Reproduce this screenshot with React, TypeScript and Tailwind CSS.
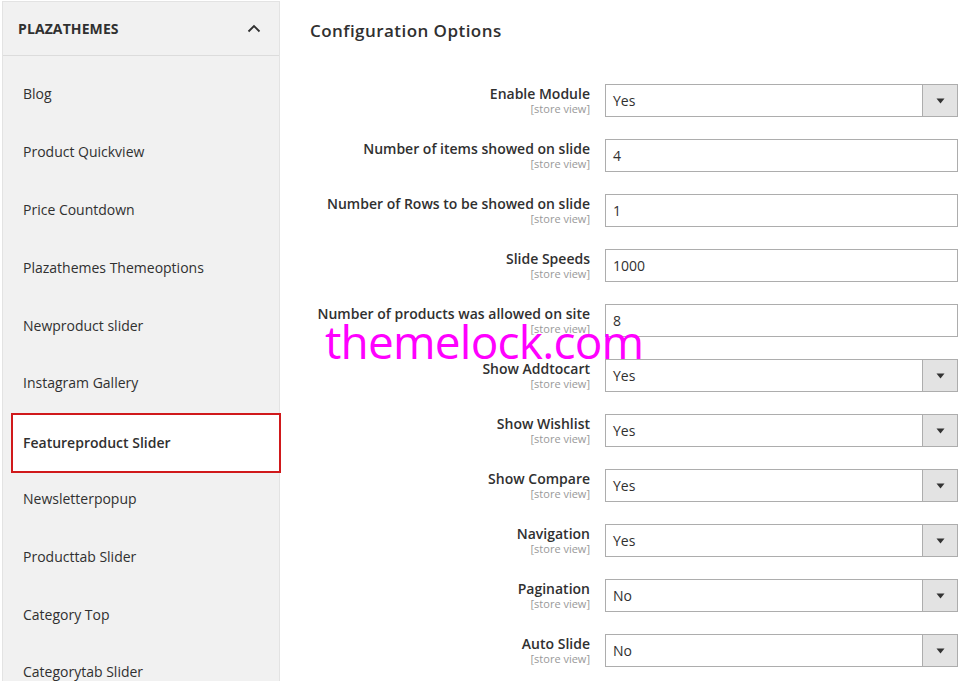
import React from 'react';

const menuItems = [
  'Blog',
  'Product Quickview',
  'Price Countdown',
  'Plazathemes Themeoptions',
  'Newproduct slider',
  'Instagram Gallery',
  'Featureproduct Slider',
  'Newsletterpopup',
  'Producttab Slider',
  'Category Top',
  'Categorytab Slider',
];

type Field = {
  label: string;
  value: string;
  kind: 'select' | 'text';
};

const fields: Field[] = [
  { label: 'Enable Module', value: 'Yes', kind: 'select' },
  { label: 'Number of items showed on slide', value: '4', kind: 'text' },
  { label: 'Number of Rows to be showed on slide', value: '1', kind: 'text' },
  { label: 'Slide Speeds', value: '1000', kind: 'text' },
  { label: 'Number of products was allowed on site', value: '8', kind: 'text' },
  { label: 'Show Addtocart', value: 'Yes', kind: 'select' },
  { label: 'Show Wishlist', value: 'Yes', kind: 'select' },
  { label: 'Show Compare', value: 'Yes', kind: 'select' },
  { label: 'Navigation', value: 'Yes', kind: 'select' },
  { label: 'Pagination', value: 'No', kind: 'select' },
  { label: 'Auto Slide', value: 'No', kind: 'select' },
];

function Sidebar() {
  return (
    <aside className="w-[278px] ml-[2px] shrink-0 bg-[#f1f1f1] border-x border-[#e3e3e3] border-t mt-[1px]">
      {/* Section header */}
      <div className="h-[54px] flex items-center justify-between pl-[15px] pr-[18px] border-b border-[#dcdcdc]">
        <span className="text-[14px] font-bold text-[#303030] tracking-[0.1px]">PLAZATHEMES</span>
        <svg width="14" height="9" viewBox="0 0 14 9" fill="none">
          <path d="M1.5 7.5 L7 2 L12.5 7.5" stroke="#303030" strokeWidth="1.8" />
        </svg>
      </div>

      <ul className="pt-[9px]">
        {menuItems.map((item) => {
          const active = item === 'Featureproduct Slider';
          return (
            <li
              key={item}
              className={
                active
                  ? 'h-[60px] mt-[1px] -mb-[3.2px] ml-[8px] -mr-[2px] pl-[10px] flex items-center bg-white border-2 border-[#d0191b] text-[14px] font-semibold text-[#303030] relative'
                  : 'h-[57.8px] pl-[20px] flex items-center text-[14px] text-[#303030]'
              }
            >
              {item}
            </li>
          );
        })}
      </ul>
    </aside>
  );
}

function SelectBox({ value }: { value: string }) {
  return (
    <div className="w-[353px] h-[33px] border border-[#adadad] bg-white flex">
      <div className="flex-1 pl-[7px] flex items-center text-[14px] text-[#303030]">{value}</div>
      <div className="w-[35px] bg-[#e3e3e3] border-l border-[#adadad] flex items-center justify-center">
        <svg width="9" height="6" viewBox="0 0 9 6">
          <path d="M0.5 0.5 H8.5 L4.5 5.5 Z" fill="#333" />
        </svg>
      </div>
    </div>
  );
}

function TextBox({ value }: { value: string }) {
  return (
    <div className="w-[353px] h-[33px] border border-[#adadad] bg-white pl-[7px] flex items-center text-[14px] text-[#303030]">
      {value}
    </div>
  );
}

export default function App() {
  return (
    <div
      className="w-[975px] h-[681px] overflow-hidden bg-white flex relative"
      style={{ fontFamily: '"Open Sans", "Noto Sans", sans-serif' }}
    >
      <Sidebar />

      <main className="flex-1 pl-[30px]">
        <h2 className="text-[17px] font-semibold text-[#303030] mt-[19px] leading-[24px] tracking-[0.45px]">
          Configuration Options
        </h2>

        <div className="mt-[41px] flex flex-col gap-[22px]">
          {fields.map((f) => (
            <div key={f.label} className="flex gap-[15px]">
              <div className="w-[280px] text-right pt-[1px]">
                <div className="text-[14px] font-semibold text-[#303030] leading-[18px]">{f.label}</div>
                <div className="text-[11px] text-[#999] leading-[12px]">[store view]</div>
              </div>
              {f.kind === 'select' ? <SelectBox value={f.value} /> : <TextBox value={f.value} />}
            </div>
          ))}
        </div>
      </main>

      {/* watermark */}
      <div className="absolute left-[325px] top-[311px] text-[46px] leading-[60px] text-[#ff00ff] tracking-[-0.8px] pointer-events-none">
        themelock.com
      </div>
    </div>
  );
}
